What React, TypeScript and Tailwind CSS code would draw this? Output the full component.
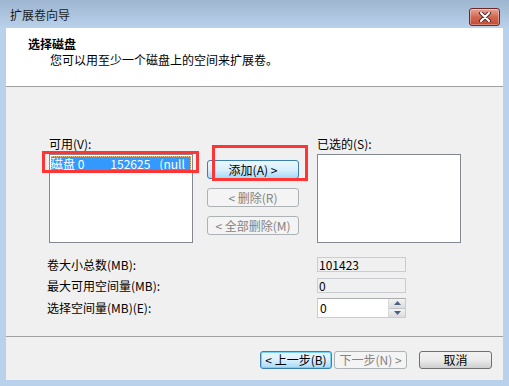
import React from "react";

const font = "font-['SimSun','Noto_Sans_CJK_SC',sans-serif]";

const ListBox = ({ children }: { children?: React.ReactNode }) => (
  <div className="w-[144px] h-[89px] bg-white border border-[#828790] p-px">{children}</div>
);

const ReadOnly = ({ value }: { value: string }) => (
  <div className="w-[89px] h-[15px] bg-[#f0f0f0] border border-[#c9ccd1] flex items-center pl-px leading-none text-[12px]">
    {value}
  </div>
);

export default function App() {
  return (
    <div
      className={`relative w-[509px] h-[386px] flex flex-col bg-[#b9d1ea] text-[12px] text-black overflow-hidden ${font}`}
    >
      {/* title bar */}
      <div className="h-[28px] flex items-start justify-between bg-gradient-to-b from-[#9db5cf] to-[#b9d1ea] pl-[10px] pr-[9px]">
        <span className="mt-[7px] leading-[15px] text-[#1b1b1b]">扩展卷向导</span>
        <button className="mt-[8px] w-[31px] h-[18px] rounded-[3px] border border-[#6b2a2a] bg-gradient-to-b from-[#e6a596] via-[#d2684f] to-[#c24a34] flex items-center justify-center shadow-[inset_0_0_0_1px_rgba(255,255,255,0.35)]">
          <svg width="14" height="10" viewBox="0 0 14 10">
            <path d="M3 1 L11 9 M11 1 L3 9" stroke="#5a2a2a" strokeWidth="4" strokeLinecap="round" />
            <path d="M3 1 L11 9 M11 1 L3 9" stroke="#ffffff" strokeWidth="2" strokeLinecap="round" />
          </svg>
        </button>
      </div>

      {/* client area */}
      <div className="mx-[6px] mb-[6px] flex-1 flex flex-col bg-[#f0f0f0]">
        <div className="h-[59px] bg-white border-b border-[#a0a0a0] pt-[9px] pl-[22px]">
          <div className="font-bold leading-[14px]">选择磁盘</div>
          <div className="pl-[22px] mt-[1px] leading-[15px]">您可以用至少一个磁盘上的空间来扩展卷。</div>
        </div>

        <div className="flex-1 flex flex-col pt-[50px]">
          <div className="flex pl-[43px]">
            <div className="flex flex-col">
              <div className="leading-[14px] mb-[3px]">可用(V):</div>
              <ListBox>
                <div className="h-[15px] bg-[#3399ff] text-white outline-1 outline-dotted outline-[#f5c07a] -outline-offset-1 flex items-center leading-none whitespace-nowrap overflow-hidden">
                  <span>磁盘 0</span>
                  <span className="ml-[26px]">152625</span>
                  <span className="ml-[9px]">(null</span>
                </div>
              </ListBox>
            </div>

            <div className="ml-[14px] pt-[23px] flex flex-col gap-[9px]">
              <button className="w-[92px] h-[19px] rounded-[3px] border border-[#3c7fb1] bg-gradient-to-b from-[#eaf6fd] via-[#d9f0fc] to-[#a7d9f5] flex items-center justify-center leading-none whitespace-pre">
                添加(A) &gt;
              </button>
              <button className="w-[92px] h-[19px] rounded-[3px] border border-[#adb2b5] bg-[#f4f4f4] text-[#838383] flex items-center justify-center leading-none whitespace-pre">
                &lt; 删除(R)
              </button>
              <button className="w-[92px] h-[19px] rounded-[3px] border border-[#adb2b5] bg-[#f4f4f4] text-[#838383] flex items-center justify-center leading-none whitespace-pre">
                &lt; 全部删除(M)
              </button>
            </div>

            <div className="ml-[18px] flex flex-col">
              <div className="leading-[14px] mb-[3px]">已选的(S):</div>
              <ListBox />
            </div>
          </div>

          <div className="mt-[14px] pl-[41px] pr-[97px] flex flex-col">
            <div className="flex items-center justify-between h-[15px]">
              <span className="leading-none">卷大小总数(MB):</span>
              <ReadOnly value="101423" />
            </div>
            <div className="mt-[6px] flex items-center justify-between h-[15px]">
              <span className="leading-none">最大可用空间量(MB):</span>
              <ReadOnly value="0" />
            </div>
            <div className="mt-[5px] flex items-center justify-between h-[20px]">
              <span className="leading-none">选择空间量(MB)(E):</span>
              <div className="w-[89px] h-[20px] bg-white border border-[#c9ccd1] border-t-[#abadb3] flex">
                <span className="flex-1 pl-[2px] flex items-center leading-none">0</span>
                <div className="w-[17px] flex flex-col border-l border-[#d6d8dc]">
                  <div className="flex-1 flex items-center justify-center bg-gradient-to-b from-[#f3f3f3] to-[#dcdcdc] border-b border-[#c2c5ca]">
                    <svg width="7" height="4" viewBox="0 0 7 4"><path d="M0 4 L3.5 0 L7 4Z" fill="#4d6185" /></svg>
                  </div>
                  <div className="flex-1 flex items-center justify-center bg-gradient-to-b from-[#f3f3f3] to-[#dcdcdc]">
                    <svg width="7" height="4" viewBox="0 0 7 4"><path d="M0 0 L3.5 4 L7 0Z" fill="#4d6185" /></svg>
                  </div>
                </div>
              </div>
            </div>
          </div>
        </div>

        <div className="h-[44px] border-t border-[#a0a0a0] flex items-start justify-end pt-[14px] pr-[11px]">
          <button className="w-[72px] h-[18px] rounded-[3px] border border-[#3c7fb1] bg-gradient-to-b from-[#eaf6fd] via-[#d9f0fc] to-[#a7d9f5] shadow-[inset_0_0_0_1px_#7ad1f7] flex items-center justify-center leading-none whitespace-pre">
            &lt; 上一步(B)
          </button>
          <button className="ml-[2px] w-[73px] h-[18px] rounded-[3px] border border-[#adb2b5] bg-[#f4f4f4] text-[#838383] flex items-center justify-center leading-none whitespace-pre">
            下一步(N) &gt;
          </button>
          <button className="ml-[12px] w-[73px] h-[18px] rounded-[3px] border border-[#707070] bg-gradient-to-b from-[#f2f2f2] via-[#ebebeb] to-[#cfcfcf] flex items-center justify-center leading-none">
            取消
          </button>
        </div>
      </div>

      {/* annotation boxes */}
      <div className="absolute left-[42px] top-[151px] w-[157px] h-[22px] border-[3px] border-[#ff3535]" />
      <div className="absolute left-[212px] top-[145px] w-[96px] h-[36px] border-[3px] border-[#ff3535]" />
    </div>
  );
}
